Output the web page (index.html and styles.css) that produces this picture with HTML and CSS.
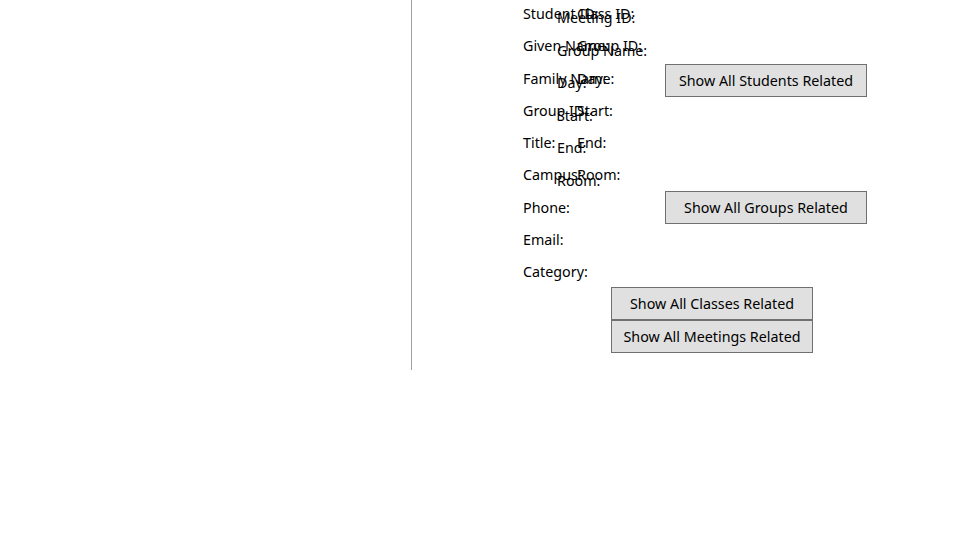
FILE: index.html
```html
<!DOCTYPE html>
<html>
<head>
<meta charset="utf-8">
<link rel="stylesheet" href="styles.css">
</head>
<body>
<div class="window">
  <div class="left"></div>
  <div class="right">
    <div class="panel p-student">
      <div class="lbl">Student ID:</div>
      <div class="lbl">Given Name:</div>
      <div class="lbl">Family Name:</div>
      <div class="lbl">Group ID:</div>
      <div class="lbl">Title:</div>
      <div class="lbl">Campus:</div>
      <div class="lbl">Phone:</div>
      <div class="lbl">Email:</div>
      <div class="lbl">Category:</div>
    </div>
    <div class="panel p-class">
      <div class="lbl">Class ID:</div>
      <div class="lbl">Group ID:</div>
      <div class="lbl">Day:</div>
      <div class="lbl">Start:</div>
      <div class="lbl">End:</div>
      <div class="lbl">Room:</div>
    </div>
    <div class="panel p-meeting">
      <div class="lbl">Meeting ID:</div>
      <div class="lbl">Group Name:</div>
      <div class="lbl">Day:</div>
      <div class="lbl">Start:</div>
      <div class="lbl">End:</div>
      <div class="lbl">Room:</div>
    </div>
    <div class="panel p-btns-right">
      <button class="btn btn-students">Show All Students Related</button>
      <button class="btn btn-groups">Show All Groups Related</button>
    </div>
    <div class="panel p-btns-mid">
      <button class="btn">Show All Classes Related</button>
      <button class="btn">Show All Meetings Related</button>
    </div>
  </div>
</div>
</body>
</html>
```

FILE: styles.css
```css
html, body {
  margin: 0;
  padding: 0;
  background: #ffffff;
}
body {
  font-family: "Noto Sans", "Open Sans", sans-serif;
  font-size: 14.3px;
  color: #000000;
}
.window {
  display: flex;
  height: 370px;
}
.left {
  width: 411px;
  flex: none;
  border-right: 1px solid #a0a0a0;
}
.right {
  flex: 1;
  display: grid;
  grid-template-columns: 1fr;
  grid-template-rows: 1fr;
}
.panel {
  grid-area: 1 / 1;
  display: flex;
  flex-direction: column;
  align-items: flex-start;
}
.lbl {
  height: 32.3px;
  line-height: 27px;
  white-space: nowrap;
}
.p-student {
  padding-left: 111px;
}
.p-class {
  padding-left: 165px;
}
.p-meeting {
  padding-left: 145px;
  padding-top: 4px;
}
.p-meeting .lbl {
  height: 32.6px;
}
.btn {
  font-family: inherit;
  font-size: 14.3px;
  color: #000000;
  background: #e0e0e0;
  border: 1px solid #707070;
  border-radius: 0;
  padding: 0;
  margin: 0;
  width: 202px;
  height: 33px;
  box-sizing: border-box;
}
.p-btns-right {
  padding-left: 253px;
}
.btn-students {
  margin-top: 64px;
}
.btn-groups {
  margin-top: 94px;
}
.p-btns-mid {
  padding-left: 199px;
  padding-top: 287px;
}
```
